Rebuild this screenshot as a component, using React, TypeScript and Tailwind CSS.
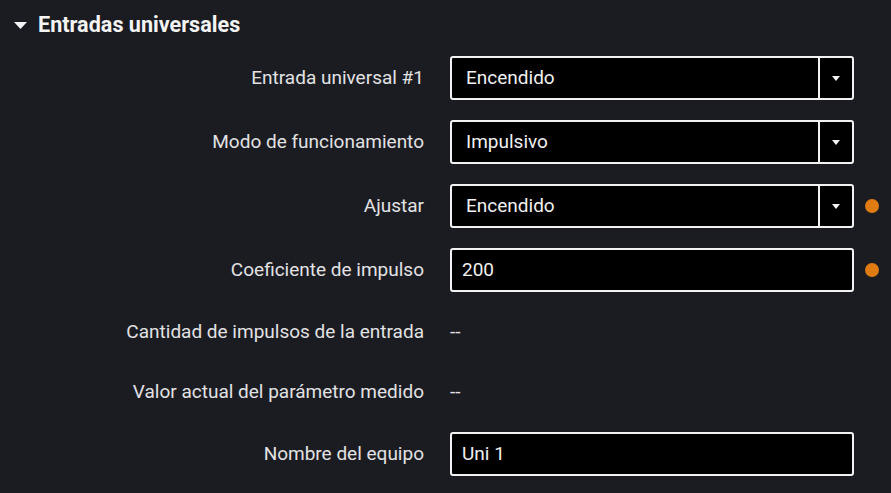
import React from "react";

const font = { fontFamily: "Roboto, 'Noto Sans', sans-serif" };

function Row({
  label,
  children,
  dot,
  h = 44,
}: {
  label: string;
  children: React.ReactNode;
  dot?: boolean;
  h?: number;
}) {
  return (
    <div className={`flex items-center ${h === 44 ? "h-[44px]" : "h-[40px]"}`}>
      <div className="w-[424px] shrink-0 text-right text-[19px] text-[#e2e2e4]">{label}</div>
      <div className="ml-[26px] w-[404px] shrink-0">{children}</div>
      {dot && <div className="ml-[11px] h-[14px] w-[14px] rounded-full bg-[#e07b12]" />}
    </div>
  );
}

function Dropdown({ value }: { value: string }) {
  return (
    <div className="flex h-[44px] rounded-[3px] border-2 border-[#f2f2f2] bg-black">
      <div className="flex flex-1 items-center pl-[14px] text-[19px] text-[#f0f0f0]">{value}</div>
      <div className="flex w-[34px] items-center justify-center border-l-2 border-[#f2f2f2]">
        <svg width="8" height="5" viewBox="0 0 8 5">
          <path d="M0 0 L8 0 L4 5 Z" fill="#f2f2f2" />
        </svg>
      </div>
    </div>
  );
}

function Input({ value }: { value: string }) {
  return (
    <div className="flex h-[44px] items-center rounded-[3px] border-2 border-[#f2f2f2] bg-black pl-[10px] text-[19px] text-[#f0f0f0]">
      {value}
    </div>
  );
}

export default function App() {
  return (
    <div style={font} className="h-[493px] w-[891px] overflow-hidden bg-[#1b1c21]">
      <div className="flex h-[50px] items-center">
        <svg className="ml-[14px]" width="13" height="7" viewBox="0 0 13 7">
          <path d="M0 0 L13 0 L6.5 7 Z" fill="#f4f4f4" />
        </svg>
        <div className="ml-[11px] text-[21.6px] font-bold text-[#f4f4f4]">Entradas universales</div>
      </div>
      <div className="flex flex-col gap-[20px] pt-[6px]">
        <Row label="Entrada universal #1">
          <Dropdown value="Encendido" />
        </Row>
        <Row label="Modo de funcionamiento">
          <Dropdown value="Impulsivo" />
        </Row>
        <Row label="Ajustar" dot>
          <Dropdown value="Encendido" />
        </Row>
        <Row label="Coeficiente de impulso" dot>
          <Input value="200" />
        </Row>
        <Row label="Cantidad de impulsos de la entrada" h={40}>
          <div className="text-[19px] text-[#e2e2e4]">--</div>
        </Row>
        <Row label="Valor actual del parámetro medido" h={40}>
          <div className="text-[19px] text-[#e2e2e4]">--</div>
        </Row>
        <Row label="Nombre del equipo">
          <Input value="Uni 1" />
        </Row>
      </div>
    </div>
  );
}
